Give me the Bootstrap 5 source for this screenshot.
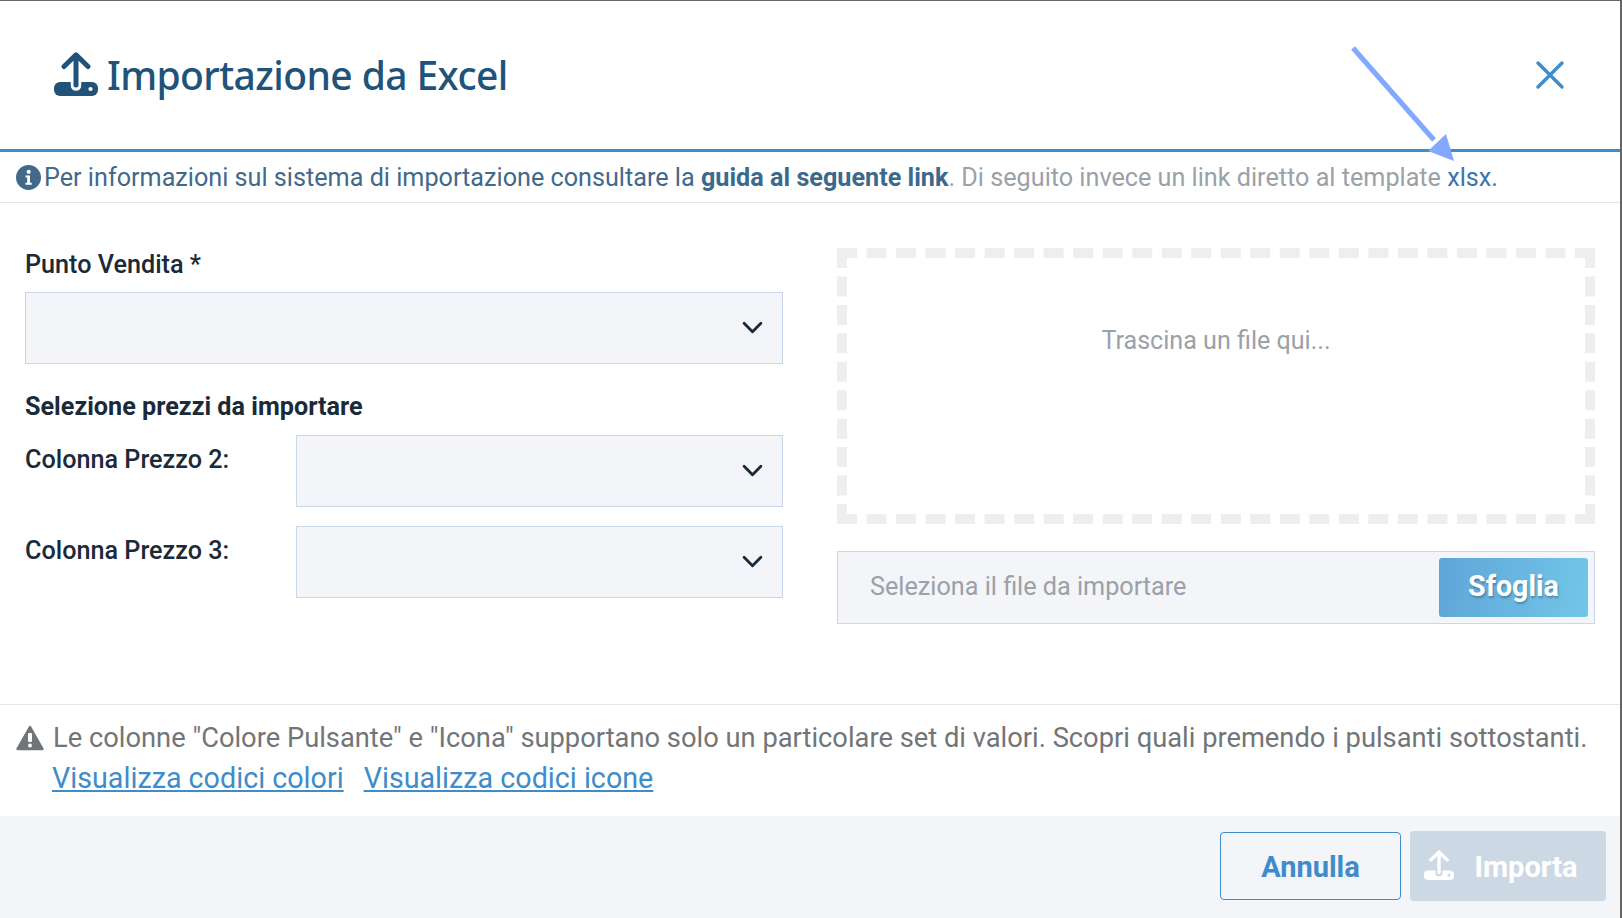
<!DOCTYPE html>
<html lang="it"><head><meta charset="utf-8"><title>Importazione da Excel</title>
<link href="https://cdn.jsdelivr.net/npm/bootstrap@5.3.0/dist/css/bootstrap.min.css" rel="stylesheet">
<style>
html,body{height:100%;overflow:hidden}
body{font-family:Roboto,"Liberation Sans",sans-serif;background:#fff;color:#1b2a38}
.shell{position:relative;height:918px;width:1622px;border-top:1px solid #666;border-right:2px solid #666;display:flex;flex-direction:column}
.dlg-head{padding:0 54px;border-bottom:3px solid #3f8cca;box-sizing:content-box;height:148px}
.dlg-title{font-family:"Noto Sans",sans-serif;font-size:39px;font-weight:500;color:#20527a;margin:0 0 0 9px;letter-spacing:-.6px}
.ico-title{width:44px;height:44px;color:#20527a;--cut:#fff;margin-bottom:2px}
.btn-x{background:none;border:0;padding:0;width:30px;height:30px;margin-right:1px;line-height:0}
.info-row{height:51px;padding:1px 16px 0;font-size:25.2px;border-bottom:1px solid #e4e6e9;color:#41698a;gap:3px;white-space:nowrap}
.info-row b{color:#3c6a8c;font-weight:700}
.info-row a{color:#3c6a8c;text-decoration:none}
.info-row .dim{color:#9aa1a8}
.info-row .xl{color:#3d75ad}
.form-zone{height:502px;padding:44px 25px 0 25px;gap:54px;border-bottom:1px solid #e4e6e9}
.side{width:758px}
.fld-label{font-size:25.2px;font-weight:500;line-height:34px;margin:1px 0 10px}
.sel{height:72px;border-radius:0;border:1px solid #c9d8e8;background-color:#f3f5f9;background-image:url("data:image/svg+xml,%3csvg xmlns='http://www.w3.org/2000/svg' viewBox='0 0 20 12'%3e%3cpath fill='none' stroke='%231b2a38' stroke-width='2.7' stroke-linecap='round' stroke-linejoin='round' d='M2 2l8 8 8-8'/%3e%3c/svg%3e");background-size:21px 13px;background-position:right 19px top 28px}
.sub-h{font-size:25.2px;font-weight:700;line-height:34px;margin:26px 0 11px}
.p-row{height:91px}
.p-row .fld-label{width:271px;flex:none;margin:8px 0 0}
.drop{height:276px;margin-top:1px;border:10px dashed #eee;color:#9aa1a8;font-size:25.1px;padding-top:66px;background:#fff;line-height:34px}
.file-box{height:73px;margin-top:27px;border:1px solid #c9d8e8;background:#f3f5f9;padding:6px;gap:6px}
.file-box .form-control{background:transparent;border:0;border-radius:0;font-size:25.2px;padding:0 0 2px 26px;color:#9aa1a8;box-shadow:none}
.file-box .form-control::placeholder{color:#9aa1a8;opacity:1}
.btn-browse{width:149px;height:59px;background:linear-gradient(100deg,#5fa5d8,#72c6e8);border:0;border-radius:3px;color:#fff;font-size:28.600px;font-weight:700;text-shadow:1px 2px 2px rgba(0,0,0,.25);padding:0 0 3px}
.note{height:111px;padding:13px 16px 0;font-size:27.3px;color:#727578;line-height:40px;white-space:nowrap}
.note svg{width:28px;height:28px;margin-right:9px;flex:none}
.note-links{padding-left:36px;gap:20px;font-size:28.700px}
.note-links a{color:#3f8cca}
.dlg-foot{flex:1;background:#f3f5f9;padding:15px 14px 0 0;gap:9px}
.btn-cancel,.btn-import{font-size:29px;font-weight:700;border-radius:4px;padding:0}
.btn-cancel{width:181px;height:68px;margin-top:1px;background:transparent;border:1px solid #3f8cca;color:#3f8cca;padding-top:4px}
.btn-import,.btn-import:disabled{width:196px;height:70px;background:#cdd8e5;border:0;color:#fff;opacity:1;gap:21px;padding-right:15px}
.btn-import span{padding-top:4px}
.ico-btn{width:30px;height:30px;color:#fff;--cut:#cdd8e5;margin-bottom:3px}
.note-arrow{position:absolute;left:1350px;top:44px;pointer-events:none}
</style></head>
<body>
<div class="shell">
  <div class="dlg-head d-flex align-items-center justify-content-between">
    <div class="d-flex align-items-center">
      <svg class="ico-title" viewBox="0 0 44 44"><rect x="0" y="30" width="44" height="14" rx="6" fill="currentColor"/><circle cx="36.500" cy="37" r="2.100" fill="var(--cut)"/><path d="M22 33.500V10" stroke="var(--cut)" stroke-width="10.500" stroke-linecap="round" fill="none"/><path d="M22 33V3M10 14.500L22 2.800l12 11.700" stroke="currentColor" stroke-width="5" stroke-linecap="round" stroke-linejoin="round" fill="none"/></svg>
      <h1 class="dlg-title">Importazione da Excel</h1>
    </div>
    <button class="btn-x" type="button" aria-label="Chiudi"><svg width="30" height="30" viewBox="0 0 30 30"><path d="M3 3l24 24M27 3L3 27" stroke="#3f8cca" stroke-width="3.400" stroke-linecap="round"/></svg></button>
  </div>
  <div class="info-row d-flex align-items-center">
    <svg width="25" height="25" viewBox="0 0 25 25" class="flex-none"><circle cx="12.500" cy="12.500" r="12.500" fill="#41698a"/><circle cx="12.700" cy="6.800" r="2.100" fill="#fff"/><path d="M9.500 10.500h4.500v7.300h1.800v2H9.500v-2h1.700v-5.300H9.500z" fill="#fff"/></svg>
    <span>Per informazioni sul sistema di importazione consultare la <a href="#"><b>guida al seguente link</b></a><span class="dim">. Di seguito invece un link diretto al template </span><a href="#" class="xl">xlsx</a><span class="dim xl">.</span></span>
  </div>
  <div class="form-zone d-flex">
    <div class="side">
      <label class="fld-label d-block">Punto Vendita *</label>
      <select class="form-select sel" aria-label="Punto Vendita"></select>
      <div class="sub-h">Selezione prezzi da importare</div>
      <div class="p-row d-flex"><label class="fld-label">Colonna Prezzo 2:</label><select class="form-select sel" aria-label="Colonna Prezzo 2"></select></div>
      <div class="p-row d-flex"><label class="fld-label">Colonna Prezzo 3:</label><select class="form-select sel" aria-label="Colonna Prezzo 3"></select></div>
    </div>
    <div class="side">
      <div class="drop text-center">Trascina un file qui...</div>
      <div class="file-box d-flex align-items-center">
        <input class="form-control" type="text" placeholder="Seleziona il file da importare" readonly>
        <button class="btn btn-browse flex-shrink-0" type="button">Sfoglia</button>
      </div>
    </div>
  </div>
  <div class="note">
    <div class="d-flex align-items-center">
      <svg viewBox="0 0 28 26"><path d="M14 2L26.500 24H1.500z" fill="#727578" stroke="#727578" stroke-width="2.500" stroke-linejoin="round"/><rect x="12" y="8" width="4" height="9" rx="1.200" fill="#fff"/><circle cx="14" cy="20.500" r="2" fill="#fff"/></svg>
      <span>Le colonne "Colore Pulsante" e "Icona" supportano solo un particolare set di valori. Scopri quali premendo i pulsanti sottostanti.</span>
    </div>
    <div class="note-links d-flex"><a href="#">Visualizza codici colori</a><a href="#">Visualizza codici icone</a></div>
  </div>
  <div class="dlg-foot d-flex justify-content-end">
    <button class="btn btn-cancel" type="button">Annulla</button>
    <button class="btn btn-import d-flex align-items-center justify-content-center" type="button" disabled>
      <svg class="ico-btn" viewBox="0 0 44 44"><rect x="0" y="30" width="44" height="14" rx="6" fill="currentColor"/><circle cx="36.500" cy="37" r="2.100" fill="var(--cut)"/><path d="M22 33.500V10" stroke="var(--cut)" stroke-width="10.500" stroke-linecap="round" fill="none"/><path d="M22 33V3M10 14.500L22 2.800l12 11.700" stroke="currentColor" stroke-width="5" stroke-linecap="round" stroke-linejoin="round" fill="none"/></svg>
      <span>Importa</span>
    </button>
  </div>
  <svg class="note-arrow" width="110" height="122" viewBox="0 0 110 122"><path d="M3 3L84 95" stroke="#82a8ff" stroke-width="5" fill="none"/><path d="M104 116L96 89L78 106z" fill="#82a8ff"/></svg>
</div>
<script src="https://cdn.jsdelivr.net/npm/bootstrap@5.3.0/dist/js/bootstrap.bundle.min.js"></script>
</body></html>
